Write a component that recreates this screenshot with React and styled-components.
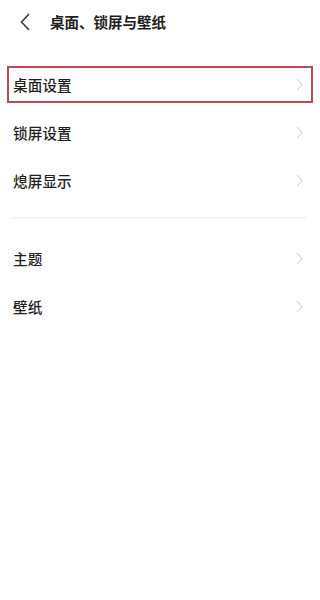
import React from 'react'
import styled, { createGlobalStyle } from 'styled-components'

const GlobalStyle = createGlobalStyle`
  html, body {
    margin: 0;
    padding: 0;
    background: #fff;
  }
  body {
    font-family: "Noto Sans CJK SC", "Noto Sans", sans-serif;
    color: #222;
  }
`;

const Page = styled.div`
  width: 320px;
  min-height: 600px;
  background: #fff;
`;

const Header = styled.div`
  height: 44px;
  display: flex;
  align-items: center;
  padding-left: 19px;
`;

const BackButton = styled.button`
  border: 0;
  background: none;
  padding: 0;
  width: 11px;
  height: 20px;
  display: flex;
  align-items: center;
  justify-content: center;
  cursor: pointer;
`;

const Title = styled.div`
  margin-left: 20px;
  font-size: 14.5px;
  font-weight: 700;
  color: #1e1e1e;
  line-height: 1;
  white-space: nowrap;
`;

const Section = styled.div`
  padding: ${p => p.$top}px 0 13px;
`;

const Divider = styled.hr`
  margin: 0 14px 0 10px;
  border: 0;
  height: 2px;
  background: #f3f3f3;
`;

const Row = styled.div`
  position: relative;
  height: 48px;
  display: flex;
  align-items: center;
  justify-content: space-between;
  padding: 0 17px 0 13px;

  ${p => p.$highlight && `
    &::after {
      content: "";
      position: absolute;
      left: 7px;
      right: 7px;
      top: 6px;
      bottom: 5px;
      border: 2px solid #bf4a54;
      pointer-events: none;
    }
  `}
`;

const Label = styled.span`
  font-size: 14.6px;
  font-weight: 500;
  color: #1f1f1f;
  letter-spacing: 0.1px;
`;

function Chevron() {
  return (
    <svg width="7" height="13" viewBox="0 0 7 13">
      <polyline points="1,1 6,6.5 1,12" fill="none" stroke="#d0d0d0" strokeWidth="1.1" />
    </svg>
  );
}

function Item({ label, highlight }) {
  return (
    <Row $highlight={highlight}>
      <Label>{label}</Label>
      <Chevron />
    </Row>
  );
}

export default function App() {
  return (
    <Page>
      <GlobalStyle />
      <Header>
        <BackButton aria-label="返回">
          <svg width="10" height="18" viewBox="0 0 10 18">
            <polyline points="9,1 1.5,9 9,17" fill="none" stroke="#333" strokeWidth="1.5" />
          </svg>
        </BackButton>
        <Title>桌面、锁屏与壁纸</Title>
      </Header>

      <Section $top={16}>
        <Item label="桌面设置" highlight />
        <Item label="锁屏设置" />
        <Item label="熄屏显示" />
      </Section>
      <Divider />
      <Section $top={15}>
        <Item label="主题" />
        <Item label="壁纸" />
      </Section>
    </Page>
  );
}
